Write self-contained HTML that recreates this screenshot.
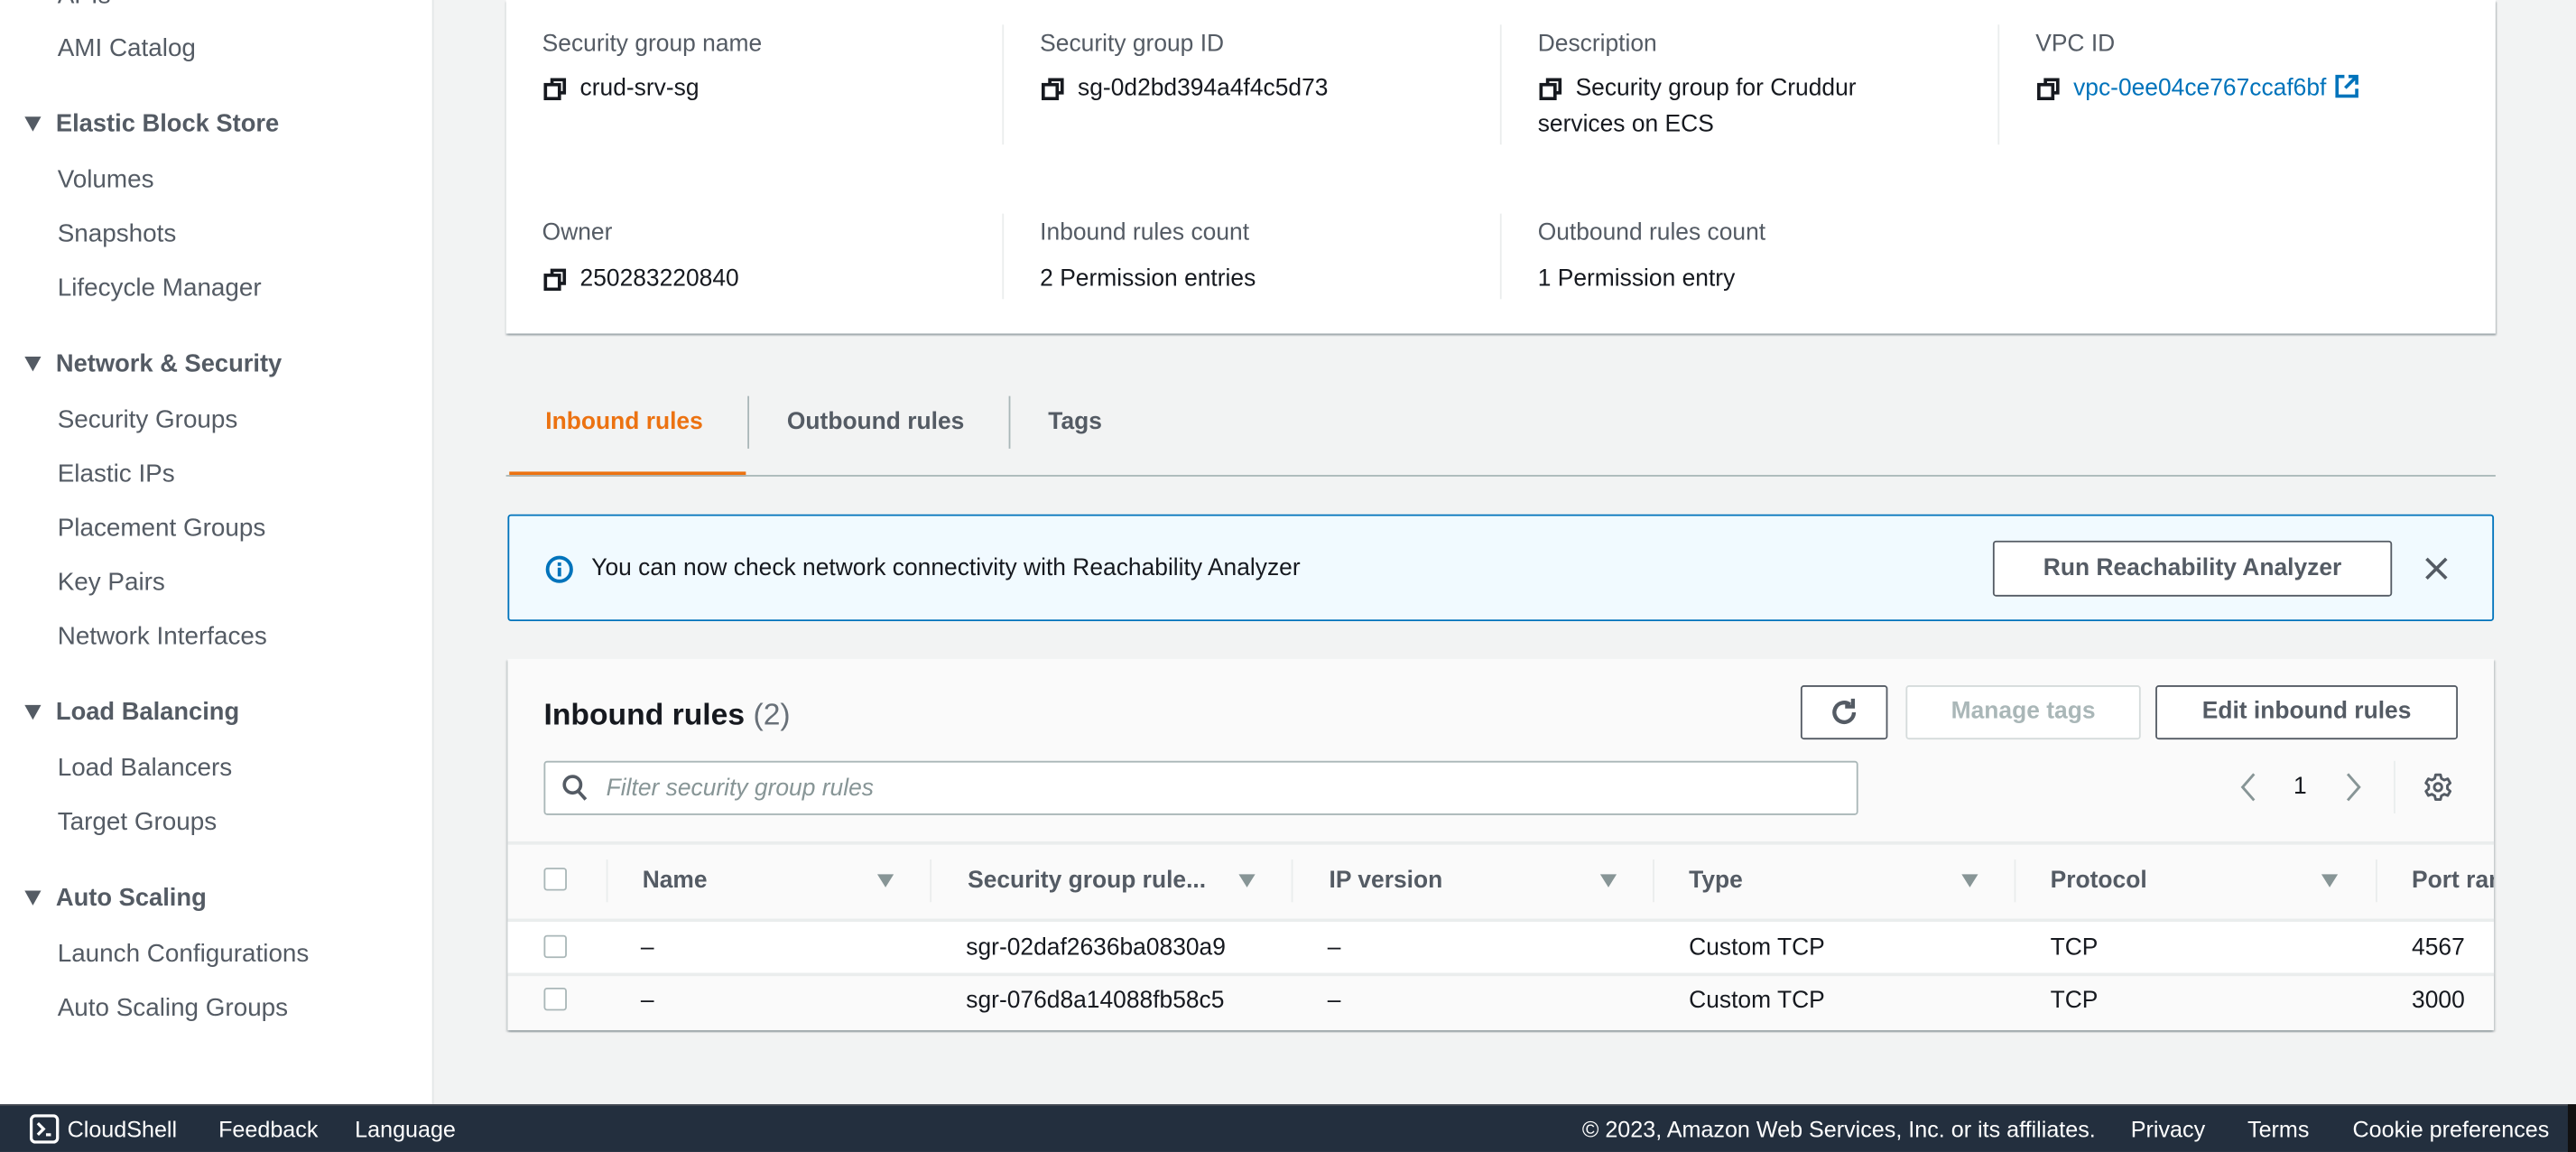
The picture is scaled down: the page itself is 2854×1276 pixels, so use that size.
<!DOCTYPE html>
<html><head><meta charset="utf-8">
<style>
*{margin:0;padding:0;box-sizing:border-box}
html,body{width:2854px;height:1276px;overflow:hidden;background:#f2f3f3}
#w{position:absolute;left:0;top:0;width:1568px;height:701px;transform:scale(1.8202);transform-origin:0 0;font-family:"Liberation Sans",Arial,sans-serif;font-size:14.5px;color:#16191f;background:#f2f3f3}
.a{position:absolute;white-space:nowrap;line-height:18px}
.side{position:absolute;left:0;top:0;width:264px;height:672px;background:#fff;border-right:1px solid #e4e7e8}
.si{color:#545b64;font-size:15.3px}
.sh{color:#545b64;font-weight:bold;font-size:15px}
.tri{position:absolute;width:0;height:0;border-left:5px solid transparent;border-right:5px solid transparent;border-top:9px solid #545b64}
.lbl{color:#545b64}
.vl{position:absolute;width:1px;background:#eaeded}
.btn{position:absolute;border:1px solid #545b64;border-radius:2px;background:#fff;font-weight:bold;color:#545b64;text-align:center;font-size:14.5px}
.cp{position:absolute;width:14px;height:14px}
.sort{position:absolute;width:0;height:0;border-left:5px solid transparent;border-right:5px solid transparent;border-top:8px solid #879596}
.cb{position:absolute;width:14px;height:14px;border:1px solid #aab7b8;border-radius:2px;background:#fff}
.th{color:#545b64;font-weight:bold}
.ft{color:#fff;font-size:13.8px}
</style></head><body><div id="w">
<div class="side">
<div class="a si" style="left:35px;top:-11px">APIs</div>
<div class="a si" style="left:35px;top:21px">AMI Catalog</div>
<div class="tri" style="left:15px;top:71px"></div><div class="a sh" style="left:34px;top:67px">Elastic Block Store</div>
<div class="a si" style="left:35px;top:101px">Volumes</div>
<div class="a si" style="left:35px;top:134px">Snapshots</div>
<div class="a si" style="left:35px;top:167px">Lifecycle Manager</div>
<div class="tri" style="left:15px;top:217px"></div><div class="a sh" style="left:34px;top:213px">Network &amp; Security</div>
<div class="a si" style="left:35px;top:247px">Security Groups</div>
<div class="a si" style="left:35px;top:280px">Elastic IPs</div>
<div class="a si" style="left:35px;top:313px">Placement Groups</div>
<div class="a si" style="left:35px;top:346px">Key Pairs</div>
<div class="a si" style="left:35px;top:379px">Network Interfaces</div>
<div class="tri" style="left:15px;top:429px"></div><div class="a sh" style="left:34px;top:425px">Load Balancing</div>
<div class="a si" style="left:35px;top:459px">Load Balancers</div>
<div class="a si" style="left:35px;top:492px">Target Groups</div>
<div class="tri" style="left:15px;top:542px"></div><div class="a sh" style="left:34px;top:538px">Auto Scaling</div>
<div class="a si" style="left:35px;top:572px">Launch Configurations</div>
<div class="a si" style="left:35px;top:605px">Auto Scaling Groups</div>
</div>

<div style="position:absolute;left:308px;top:0;width:1211px;height:203px;background:#fff;box-shadow:0 1px 1px rgba(0,28,36,.3),1px 1px 1px rgba(0,28,36,.15)"></div>
<div class="vl" style="left:610px;top:15px;height:73px"></div>
<div class="vl" style="left:913px;top:15px;height:73px"></div>
<div class="vl" style="left:1216px;top:15px;height:73px"></div>
<div class="vl" style="left:610px;top:130px;height:52px"></div>
<div class="vl" style="left:913px;top:130px;height:52px"></div>
<svg width="0" height="0" style="position:absolute"><defs><symbol id="cpy" viewBox="0 0 14 14"><rect x="1" y="4.5" width="8.5" height="8.5" fill="none" stroke="#16191f" stroke-width="2"/><path d="M5 4.5V1.5h7.5v8H9.5" fill="none" stroke="#16191f" stroke-width="2"/></symbol></defs></svg>
<div class="a lbl" style="left:330px;top:18px">Security group name</div>
<svg class="cp" style="left:331px;top:47px"><use href="#cpy"/></svg><div class="a" style="left:353px;top:45px">crud-srv-sg</div>
<div class="a lbl" style="left:633px;top:18px">Security group ID</div>
<svg class="cp" style="left:634px;top:47px"><use href="#cpy"/></svg><div class="a" style="left:656px;top:45px">sg-0d2bd394a4f4c5d73</div>
<div class="a lbl" style="left:936px;top:18px">Description</div>
<svg class="cp" style="left:937px;top:47px"><use href="#cpy"/></svg><div class="a" style="left:959px;top:45px">Security group for Cruddur</div>
<div class="a" style="left:936px;top:67px">services on ECS</div>
<div class="a lbl" style="left:1239px;top:18px">VPC ID</div>
<svg class="cp" style="left:1240px;top:47px"><use href="#cpy"/></svg><div class="a" style="left:1262px;top:45px;color:#0073bb">vpc-0ee04ce767ccaf6bf <svg style="vertical-align:-2px;margin-left:1px" width="15" height="15" viewBox="0 0 15 15"><path d="M6 1.5H1.5v12h12V9" fill="none" stroke="#0073bb" stroke-width="2"/><path d="M8.5 1.5h5v5M13.5 1.5L6.5 8.5" fill="none" stroke="#0073bb" stroke-width="2"/></svg></div>
<div class="a lbl" style="left:330px;top:133px">Owner</div>
<svg class="cp" style="left:331px;top:163px"><use href="#cpy"/></svg><div class="a" style="left:353px;top:161px">250283220840</div>
<div class="a lbl" style="left:633px;top:133px">Inbound rules count</div>
<div class="a" style="left:633px;top:161px">2 Permission entries</div>
<div class="a lbl" style="left:936px;top:133px">Outbound rules count</div>
<div class="a" style="left:936px;top:161px">1 Permission entry</div>

<div class="a" style="left:332px;top:248px;font-weight:bold;color:#ec7211">Inbound rules</div>
<div style="position:absolute;left:310px;top:287px;width:144px;height:3px;background:#ec7211"></div>
<div class="vl" style="left:455px;top:241px;height:32px;background:#aab7b8"></div>
<div class="a" style="left:479px;top:248px;font-weight:bold;color:#545b64">Outbound rules</div>
<div class="vl" style="left:614px;top:241px;height:32px;background:#aab7b8"></div>
<div class="a" style="left:638px;top:248px;font-weight:bold;color:#545b64">Tags</div>
<div style="position:absolute;left:308px;top:289px;width:1211px;height:1px;background:#aab7b8"></div>

<div style="position:absolute;left:309px;top:313px;width:1209px;height:65px;background:#f1faff;border:1px solid #0073bb;border-radius:2px"></div>
<svg style="position:absolute;left:332px;top:338px" width="17" height="17" viewBox="0 0 16 16"><circle cx="8" cy="8" r="6.8" fill="none" stroke="#0073bb" stroke-width="2"/><rect x="7" y="7" width="2" height="5" fill="#0073bb"/><rect x="7" y="4" width="2" height="2" fill="#0073bb"/></svg>
<div class="a" style="left:360px;top:337px">You can now check network connectivity with Reachability Analyzer</div>
<div class="btn" style="left:1213px;top:329px;width:243px;height:34px;line-height:32px">Run Reachability Analyzer</div>
<svg style="position:absolute;left:1475px;top:338px" width="16" height="16" viewBox="0 0 16 16"><path d="M2 2L14 14M14 2L2 14" stroke="#545b64" stroke-width="2"/></svg>

<div style="position:absolute;left:309px;top:401px;width:1209px;height:226px;background:#fafafa;box-shadow:0 1px 1px rgba(0,28,36,.3),1px 1px 1px rgba(0,28,36,.15),-1px 1px 1px rgba(0,28,36,.15)"></div>
<div class="a" style="left:331px;top:424px;font-size:18.5px;font-weight:bold;line-height:22px">Inbound rules <span style="font-weight:normal;color:#687078">(2)</span></div>
<div class="btn" style="left:1096px;top:417px;width:53px;height:33px"></div>
<svg style="position:absolute;left:1113px;top:424px" width="19" height="19" viewBox="0 0 16 16"><path d="M13 8a5 5 0 1 1-2-4" fill="none" stroke="#545b64" stroke-width="2"/><path d="M12.5 1v4h-4" fill="none" stroke="#545b64" stroke-width="2"/></svg>
<div class="btn" style="left:1160px;top:417px;width:143px;height:33px;line-height:31px;border-color:#d5dbdb;color:#aab7b8">Manage tags</div>
<div class="btn" style="left:1312px;top:417px;width:184px;height:33px;line-height:31px">Edit inbound rules</div>
<div style="position:absolute;left:331px;top:463px;width:800px;height:33px;background:#fff;border:1px solid #aab7b8;border-radius:2px"></div>
<svg style="position:absolute;left:342px;top:471px" width="16" height="17" viewBox="0 0 16 17"><circle cx="6.5" cy="6.5" r="5" fill="none" stroke="#545b64" stroke-width="2"/><path d="M10 10.5l4.5 5" stroke="#545b64" stroke-width="2"/></svg>
<div class="a" style="left:369px;top:471px;font-style:italic;color:#879596">Filter security group rules</div>
<svg style="position:absolute;left:1362px;top:470px" width="12" height="18" viewBox="0 0 12 18"><path d="M10 1L3 9l7 8" fill="none" stroke="#879596" stroke-width="1.6"/></svg>
<div class="a" style="left:1396px;top:470px">1</div>
<svg style="position:absolute;left:1427px;top:470px" width="12" height="18" viewBox="0 0 12 18"><path d="M2 1l7 8-7 8" fill="none" stroke="#879596" stroke-width="1.6"/></svg>
<div class="vl" style="left:1457px;top:463px;height:32px"></div>
<svg style="position:absolute;left:1475px;top:470px" width="18" height="18" viewBox="0 0 18 18"><path d="M7.5 1.5h3l.5 2.2 1.8 1 2.1-.8 1.5 2.6-1.7 1.5v2l1.7 1.5-1.5 2.6-2.1-.8-1.8 1-.5 2.2h-3L7 14.3l-1.8-1-2.1.8L1.6 11.5 3.3 10V8L1.6 6.5 3.1 3.9l2.1.8 1.8-1z" fill="none" stroke="#545b64" stroke-width="1.6" stroke-linejoin="round"/><circle cx="9" cy="9" r="2.3" fill="none" stroke="#545b64" stroke-width="1.6"/></svg>
<div style="position:absolute;left:309px;top:512px;width:1209px;height:2px;background:#eaeded"></div>
<div style="position:absolute;left:309px;top:559px;width:1209px;height:2px;background:#eaeded"></div>
<div style="position:absolute;left:309px;top:561px;width:1209px;height:32px;background:#fff"></div>
<div style="position:absolute;left:309px;top:592px;width:1209px;height:2px;background:#eaeded"></div>
<div class="cb" style="left:331px;top:528px"></div>
<div class="vl" style="left:369px;top:523px;height:26px"></div>
<div class="a th" style="left:391px;top:527px">Name</div><div class="sort" style="left:534px;top:532px"></div>
<div class="vl" style="left:566px;top:523px;height:26px"></div>
<div class="a th" style="left:589px;top:527px">Security group rule...</div><div class="sort" style="left:754px;top:532px"></div>
<div class="vl" style="left:786px;top:523px;height:26px"></div>
<div class="a th" style="left:809px;top:527px">IP version</div><div class="sort" style="left:974px;top:532px"></div>
<div class="vl" style="left:1006px;top:523px;height:26px"></div>
<div class="a th" style="left:1028px;top:527px">Type</div><div class="sort" style="left:1194px;top:532px"></div>
<div class="vl" style="left:1226px;top:523px;height:26px"></div>
<div class="a th" style="left:1248px;top:527px">Protocol</div><div class="sort" style="left:1413px;top:532px"></div>
<div class="vl" style="left:1446px;top:523px;height:26px"></div>
<div style="position:absolute;left:1468px;top:527px;width:50px;overflow:hidden" class="a th">Port range</div>
<div class="cb" style="left:331px;top:569px"></div>
<div class="a" style="left:390px;top:568px">–</div>
<div class="a" style="left:588px;top:568px">sgr-02daf2636ba0830a9</div>
<div class="a" style="left:808px;top:568px">–</div>
<div class="a" style="left:1028px;top:568px">Custom TCP</div>
<div class="a" style="left:1248px;top:568px">TCP</div>
<div class="a" style="left:1468px;top:568px">4567</div>
<div class="cb" style="left:331px;top:601px"></div>
<div class="a" style="left:390px;top:600px">–</div>
<div class="a" style="left:588px;top:600px">sgr-076d8a14088fb58c5</div>
<div class="a" style="left:808px;top:600px">–</div>
<div class="a" style="left:1028px;top:600px">Custom TCP</div>
<div class="a" style="left:1248px;top:600px">TCP</div>
<div class="a" style="left:1468px;top:600px">3000</div>

<div style="position:absolute;left:0;top:672px;width:1568px;height:29px;background:#232f3e;border-top:1px solid #414750"></div>
<svg style="position:absolute;left:18px;top:678px" width="18" height="18" viewBox="0 0 18 18"><rect x="1" y="1" width="16" height="16" rx="2.5" fill="none" stroke="#fff" stroke-width="1.8"/><path d="M5 5.5l3.5 3.5L5 12.5" fill="none" stroke="#fff" stroke-width="1.8"/><path d="M10 12.5h3" stroke="#fff" stroke-width="1.8"/></svg>
<div class="a ft" style="left:41px;top:679px">CloudShell</div>
<div class="a ft" style="left:133px;top:679px">Feedback</div>
<div class="a ft" style="left:216px;top:679px">Language</div>
<div class="a ft" style="left:963px;top:679px">© 2023, Amazon Web Services, Inc. or its affiliates.</div>
<div class="a ft" style="left:1297px;top:679px">Privacy</div>
<div class="a ft" style="left:1368px;top:679px">Terms</div>
<div class="a ft" style="left:1432px;top:679px">Cookie preferences</div>
<div style="position:absolute;left:1563px;top:672px;width:5px;height:29px;background:#111"></div>
</div></body></html>
